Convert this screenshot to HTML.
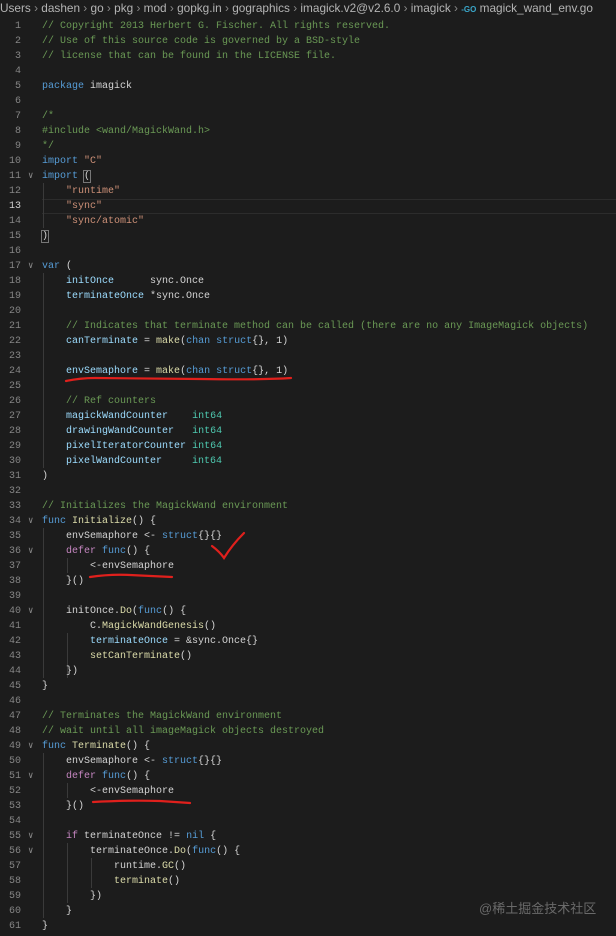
<!DOCTYPE html>
<html><head><meta charset="utf-8"><style>
html,body{margin:0;padding:0;background:#1c1c1c;width:616px;height:936px;overflow:hidden;position:relative}
.bc{position:absolute;left:0;top:1px;height:16px;font:11.8px "Liberation Sans","Noto Sans CJK SC",sans-serif;color:#b4b4b4;white-space:pre}
.bc .s{color:#8a8a8a}
.code{position:absolute;left:0;top:18.5px;font:10px/15px "Liberation Mono",monospace;color:#d4d4d4}
.l{position:relative;height:15px;white-space:pre}
.n{position:absolute;left:0;width:21px;text-align:right;color:#858585}
.n.cur{color:#d0d0d0}
.f{position:absolute;left:28px;color:#8a8a8a;font-size:9px}
.t{position:absolute;left:42px}
.c{color:#6a9955}.k{color:#569cd6}.p{color:#c586c0}.y{color:#dcdcaa}.v{color:#9cdcfe}.s{color:#ce9178}.g{color:#4ec9b0}
.guide{position:absolute;width:1px;background:#3a3a3a}
.curl{position:absolute;left:42px;right:0;top:198.5px;height:13px;border-top:1px solid #2c2c2c;border-bottom:1px solid #2c2c2c}
.wm{position:absolute;left:479px;top:898px;font:13px "Liberation Sans","Noto Sans CJK SC",sans-serif;color:#6a6a6a}
</style></head><body>
<div class="bc">Users <span class="s">›</span> dashen <span class="s">›</span> go <span class="s">›</span> pkg <span class="s">›</span> mod <span class="s">›</span> gopkg.in <span class="s">›</span> gographics <span class="s">›</span> imagick.v2@v2.6.0 <span class="s">›</span> imagick <span class="s">›</span> <span style="color:#3aa6c9;font-size:8px;font-weight:bold">-GO</span> magick_wand_env.go</div>
<div class="curl"></div>
<div class="guide" style="left:43px;top:183px;height:45px"></div>
<div class="guide" style="left:43px;top:273px;height:195px"></div>
<div class="guide" style="left:43px;top:528px;height:150px"></div>
<div class="guide" style="left:67px;top:558px;height:15px"></div>
<div class="guide" style="left:67px;top:633px;height:45px"></div>
<div class="guide" style="left:43px;top:753px;height:165px"></div>
<div class="guide" style="left:67px;top:783px;height:15px"></div>
<div class="guide" style="left:67px;top:843px;height:60px"></div>
<div class="guide" style="left:91px;top:858px;height:30px"></div>
<div class="code">
<div class="l"><span class="n">1</span><span class="t c">// Copyright 2013 Herbert G. Fischer. All rights reserved.</span></div>
<div class="l"><span class="n">2</span><span class="t c">// Use of this source code is governed by a BSD-style</span></div>
<div class="l"><span class="n">3</span><span class="t c">// license that can be found in the LICENSE file.</span></div>
<div class="l"><span class="n">4</span></div>
<div class="l"><span class="n">5</span><span class="t"><span class="k">package</span> imagick</span></div>
<div class="l"><span class="n">6</span></div>
<div class="l"><span class="n">7</span><span class="t c">/*</span></div>
<div class="l"><span class="n">8</span><span class="t c">#include &lt;wand/MagickWand.h&gt;</span></div>
<div class="l"><span class="n">9</span><span class="t c">*/</span></div>
<div class="l"><span class="n">10</span><span class="t"><span class="k">import</span> <span class="s">"C"</span></span></div>
<div class="l"><span class="n">11</span><span class="f">∨</span><span class="t"><span class="k">import</span> <span style="outline:1px solid #777">(</span></span></div>
<div class="l"><span class="n">12</span><span class="t">    <span class="s">"runtime"</span></span></div>
<div class="l"><span class="n cur">13</span><span class="t">    <span class="s">"sync"</span></span></div>
<div class="l"><span class="n">14</span><span class="t">    <span class="s">"sync/atomic"</span></span></div>
<div class="l"><span class="n">15</span><span class="t"><span style="outline:1px solid #777">)</span></span></div>
<div class="l"><span class="n">16</span></div>
<div class="l"><span class="n">17</span><span class="f">∨</span><span class="t"><span class="k">var</span> (</span></div>
<div class="l"><span class="n">18</span><span class="t">    <span class="v">initOnce</span>      sync.Once</span></div>
<div class="l"><span class="n">19</span><span class="t">    <span class="v">terminateOnce</span> *sync.Once</span></div>
<div class="l"><span class="n">20</span></div>
<div class="l"><span class="n">21</span><span class="t">    <span class="c">// Indicates that terminate method can be called (there are no any ImageMagick objects)</span></span></div>
<div class="l"><span class="n">22</span><span class="t">    <span class="v">canTerminate</span> = <span class="y">make</span>(<span class="k">chan</span> <span class="k">struct</span>{}, 1)</span></div>
<div class="l"><span class="n">23</span></div>
<div class="l"><span class="n">24</span><span class="t">    <span class="v">envSemaphore</span> = <span class="y">make</span>(<span class="k">chan</span> <span class="k">struct</span>{}, 1)</span></div>
<div class="l"><span class="n">25</span></div>
<div class="l"><span class="n">26</span><span class="t">    <span class="c">// Ref counters</span></span></div>
<div class="l"><span class="n">27</span><span class="t">    <span class="v">magickWandCounter</span>    <span class="g">int64</span></span></div>
<div class="l"><span class="n">28</span><span class="t">    <span class="v">drawingWandCounter</span>   <span class="g">int64</span></span></div>
<div class="l"><span class="n">29</span><span class="t">    <span class="v">pixelIteratorCounter</span> <span class="g">int64</span></span></div>
<div class="l"><span class="n">30</span><span class="t">    <span class="v">pixelWandCounter</span>     <span class="g">int64</span></span></div>
<div class="l"><span class="n">31</span><span class="t">)</span></div>
<div class="l"><span class="n">32</span></div>
<div class="l"><span class="n">33</span><span class="t c">// Initializes the MagickWand environment</span></div>
<div class="l"><span class="n">34</span><span class="f">∨</span><span class="t"><span class="k">func</span> <span class="y">Initialize</span>() {</span></div>
<div class="l"><span class="n">35</span><span class="t">    envSemaphore &lt;- <span class="k">struct</span>{}{}</span></div>
<div class="l"><span class="n">36</span><span class="f">∨</span><span class="t">    <span class="p">defer</span> <span class="k">func</span>() {</span></div>
<div class="l"><span class="n">37</span><span class="t">        &lt;-envSemaphore</span></div>
<div class="l"><span class="n">38</span><span class="t">    }()</span></div>
<div class="l"><span class="n">39</span></div>
<div class="l"><span class="n">40</span><span class="f">∨</span><span class="t">    initOnce.<span class="y">Do</span>(<span class="k">func</span>() {</span></div>
<div class="l"><span class="n">41</span><span class="t">        C.<span class="y">MagickWandGenesis</span>()</span></div>
<div class="l"><span class="n">42</span><span class="t">        <span class="v">terminateOnce</span> = &amp;sync.Once{}</span></div>
<div class="l"><span class="n">43</span><span class="t">        <span class="y">setCanTerminate</span>()</span></div>
<div class="l"><span class="n">44</span><span class="t">    })</span></div>
<div class="l"><span class="n">45</span><span class="t">}</span></div>
<div class="l"><span class="n">46</span></div>
<div class="l"><span class="n">47</span><span class="t c">// Terminates the MagickWand environment</span></div>
<div class="l"><span class="n">48</span><span class="t c">// wait until all imageMagick objects destroyed</span></div>
<div class="l"><span class="n">49</span><span class="f">∨</span><span class="t"><span class="k">func</span> <span class="y">Terminate</span>() {</span></div>
<div class="l"><span class="n">50</span><span class="t">    envSemaphore &lt;- <span class="k">struct</span>{}{}</span></div>
<div class="l"><span class="n">51</span><span class="f">∨</span><span class="t">    <span class="p">defer</span> <span class="k">func</span>() {</span></div>
<div class="l"><span class="n">52</span><span class="t">        &lt;-envSemaphore</span></div>
<div class="l"><span class="n">53</span><span class="t">    }()</span></div>
<div class="l"><span class="n">54</span></div>
<div class="l"><span class="n">55</span><span class="f">∨</span><span class="t">    <span class="p">if</span> terminateOnce != <span class="k">nil</span> {</span></div>
<div class="l"><span class="n">56</span><span class="f">∨</span><span class="t">        terminateOnce.<span class="y">Do</span>(<span class="k">func</span>() {</span></div>
<div class="l"><span class="n">57</span><span class="t">            runtime.<span class="y">GC</span>()</span></div>
<div class="l"><span class="n">58</span><span class="t">            <span class="y">terminate</span>()</span></div>
<div class="l"><span class="n">59</span><span class="t">        })</span></div>
<div class="l"><span class="n">60</span><span class="t">    }</span></div>
<div class="l"><span class="n">61</span><span class="t">}</span></div>
</div>
<svg width="616" height="936" style="position:absolute;left:0;top:0" fill="none" stroke="#e0201c" stroke-width="2.2" stroke-linecap="round">
<path d="M66 381 Q80 378 95 378 L200 379 Q260 380 291 378"/>
<path d="M212 546 Q220 552 224 558 Q232 545 244 533"/>
<path d="M90 577 Q110 574 130 575 L172 577"/>
<path d="M93 802 Q130 800 160 801 L190 803"/>
</svg>
<div class="wm">@稀土掘金技术社区</div>
</body></html>
